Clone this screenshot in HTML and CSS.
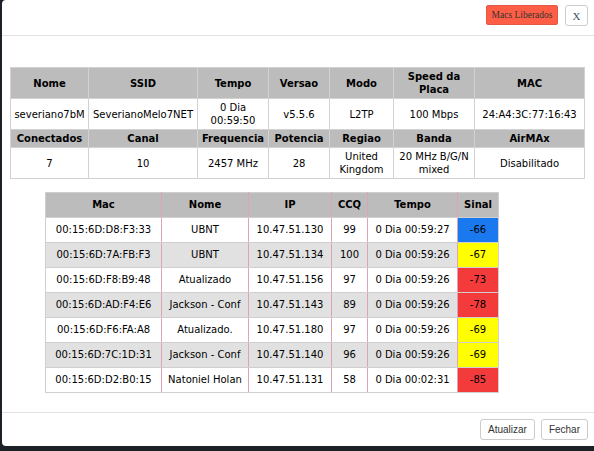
FILE: index.html
```html
<!DOCTYPE html>
<html>
<head>
<meta charset="utf-8">
<link rel="stylesheet" href="styles.css">
</head>
<body>
<div class="modal">
  <div class="modal-header">
    <button class="btn-macs">Macs Liberados</button>
    <button class="btn-close">X</button>
  </div>
  <div class="modal-body">
    <table class="info">
      <colgroup>
        <col style="width:78px"><col style="width:109px"><col style="width:71px"><col style="width:61px"><col style="width:64px"><col style="width:81px"><col style="width:110px">
      </colgroup>
      <tr class="hd"><th>Nome</th><th>SSID</th><th>Tempo</th><th>Versao</th><th>Modo</th><th>Speed da Placa</th><th>MAC</th></tr>
      <tr><td>severiano7bM</td><td>SeverianoMelo7NET</td><td>0 Dia 00:59:50</td><td>v5.5.6</td><td>L2TP</td><td>100 Mbps</td><td>24:A4:3C:77:16:43</td></tr>
      <tr class="hd"><th>Conectados</th><th>Canal</th><th>Frequencia</th><th>Potencia</th><th>Regiao</th><th>Banda</th><th>AirMAx</th></tr>
      <tr><td>7</td><td>10</td><td>2457 MHz</td><td>28</td><td>United Kingdom</td><td>20 MHz B/G/N mixed</td><td>Disabilitado</td></tr>
    </table>

    <table class="clients">
      <colgroup>
        <col style="width:116px"><col style="width:87px"><col style="width:83px"><col style="width:36px"><col style="width:90px"><col style="width:41px">
      </colgroup>
      <tr><th>Mac</th><th>Nome</th><th>IP</th><th>CCQ</th><th>Tempo</th><th>Sinal</th></tr>
      <tr><td>00:15:6D:D8:F3:33</td><td>UBNT</td><td>10.47.51.130</td><td>99</td><td>0 Dia 00:59:27</td><td class="sig blue">-66</td></tr>
      <tr><td>00:15:6D:7A:FB:F3</td><td>UBNT</td><td>10.47.51.134</td><td>100</td><td>0 Dia 00:59:26</td><td class="sig yellow">-67</td></tr>
      <tr><td>00:15:6D:F8:B9:48</td><td>Atualizado</td><td>10.47.51.156</td><td>97</td><td>0 Dia 00:59:26</td><td class="sig red">-73</td></tr>
      <tr><td>00:15:6D:AD:F4:E6</td><td>Jackson - Conf</td><td>10.47.51.143</td><td>89</td><td>0 Dia 00:59:26</td><td class="sig red">-78</td></tr>
      <tr><td>00:15:6D:F6:FA:A8</td><td>Atualizado.</td><td>10.47.51.180</td><td>97</td><td>0 Dia 00:59:26</td><td class="sig yellow">-69</td></tr>
      <tr><td>00:15:6D:7C:1D:31</td><td>Jackson - Conf</td><td>10.47.51.140</td><td>96</td><td>0 Dia 00:59:26</td><td class="sig yellow">-69</td></tr>
      <tr><td>00:15:6D:D2:B0:15</td><td>Natoniel Holan</td><td>10.47.51.131</td><td>58</td><td>0 Dia 00:02:31</td><td class="sig red">-85</td></tr>
    </table>
  </div>
  <div class="modal-footer">
    <button class="btn-foot">Atualizar</button>
    <button class="btn-foot">Fechar</button>
  </div>
</div>
</body>
</html>
```

FILE: styles.css
```css
html, body {
  margin: 0;
  padding: 0;
  overflow: hidden;
  background: #1c2127;
  width: 594px;
  height: 451px;
}

.modal {
  margin-left: 2px;
  width: 600px;
  height: 446px;
  background: #fff;
  border-radius: 4px;
  display: flex;
  flex-direction: column;
  box-sizing: border-box;
}

.modal-header {
  height: 30px;
  border-bottom: 1px solid #e2e2e2;
  display: flex;
  justify-content: flex-end;
  align-items: flex-start;
  padding: 5px 14px 0 0;
  box-sizing: content-box;
  gap: 7px;
}

.btn-macs {
  background: #fe5e45;
  border: 1px solid #e05a45;
  border-radius: 2px;
  height: 20px;
  width: 72px;
  padding: 0;
  font-family: "Liberation Serif", serif;
  font-size: 9.5px;
  color: #333;
}

.btn-close {
  background: #fff;
  border: 1px solid #ccc;
  border-radius: 3px;
  height: 21px;
  width: 23px;
  padding: 0;
  font-family: "Liberation Serif", serif;
  font-size: 11px;
  color: #4a5060;
}

.modal-body {
  flex: 1;
  padding: 31px 0 0 8px;
  font-family: "DejaVu Sans", Verdana, sans-serif;
  font-size: 10px;
  color: #000;
}

table {
  border-collapse: collapse;
  table-layout: fixed;
}

.info {
  width: 575px;
}
.info th, .info td {
  border: 1px solid #d2d2d2;
  padding: 2px 2px;
  line-height: 13px;
  text-align: center;
  vertical-align: middle;
}
.info tr.hd th {
  background: #bcbcbc;
  font-weight: bold;
}
.info tr:first-child th {
  height: 26px;
}
.info td {
  height: 26px;
}

.clients {
  margin: 13px 0 0 35px;
  width: 454px;
}
.clients th, .clients td {
  border-top: 1px solid #cfcfcf;
  border-bottom: 1px solid #cfcfcf;
  border-left: 1px solid #dea3b6;
  border-right: 1px solid #dea3b6;
  padding: 0 2px;
  height: 24px;
  line-height: 14px;
  text-align: center;
  vertical-align: middle;
  white-space: nowrap;
}
.clients tr > :first-child { border-left-color: #cfcfcf; }
.clients tr > :last-child { border-right-color: #cfcfcf; }
.clients th {
  background: #bcbcbc;
  font-weight: bold;
  border-top-color: #cfcfcf;
}
.clients tr:nth-child(odd) td { background: #e1e1e1; }
.clients tr:nth-child(2n) td { background: #fff; }
.clients td.sig.blue { background: #1a79ef; }
.clients td.sig.yellow { background: #ffff00; }
.clients td.sig.red { background: #f43b3b; }

.modal-footer {
  height: 34px;
  border-top: 1px solid #e2e2e2;
  display: flex;
  justify-content: flex-end;
  align-items: flex-start;
  padding: 6px 14px 0 0;
  gap: 6px;
  box-sizing: border-box;
}

.btn-foot {
  background: #fff;
  border: 1px solid #ccc;
  border-radius: 3px;
  height: 21px;
  padding: 0 7px;
  font-family: "Liberation Sans", Arial, sans-serif;
  font-size: 10px;
  color: #333;
}
```
